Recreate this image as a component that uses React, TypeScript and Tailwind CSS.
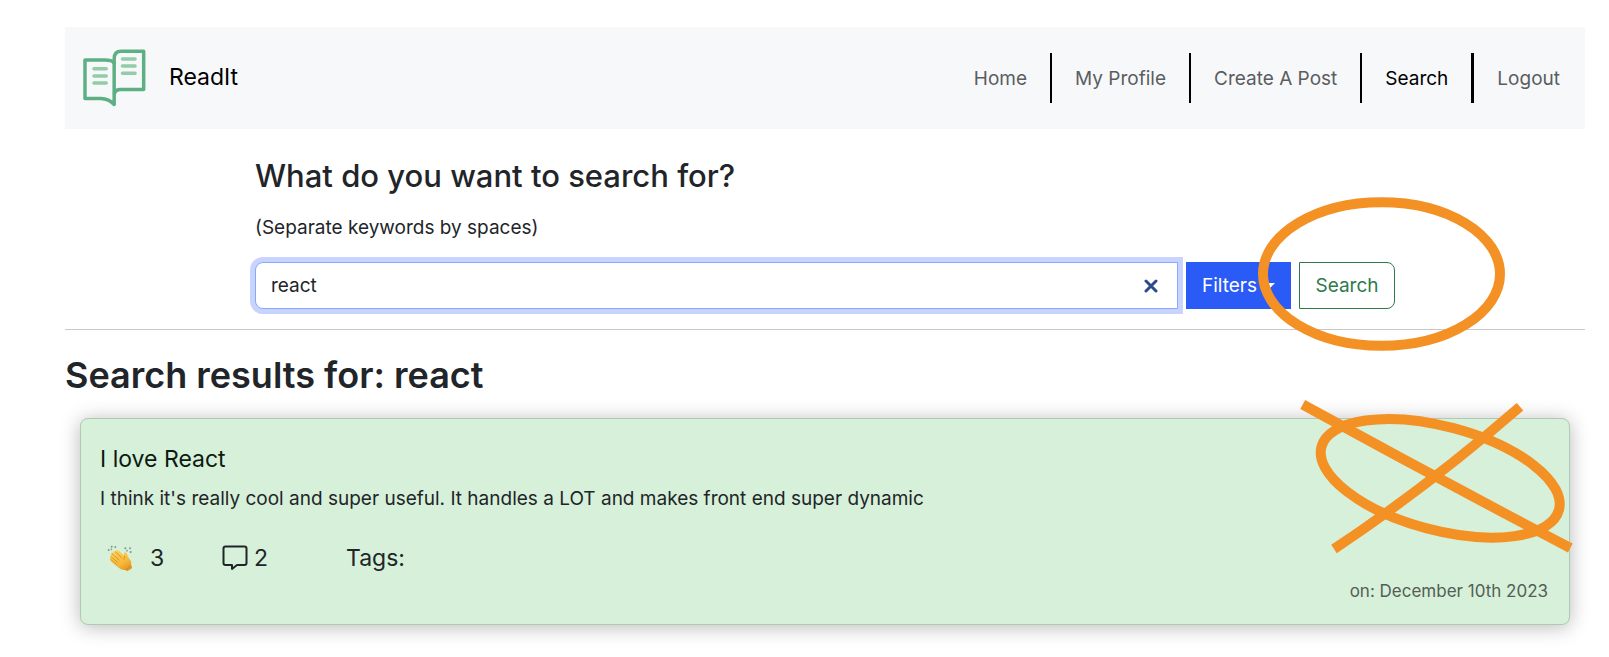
import { useState } from "react";

function Logo() {
  return (
    <svg className="h-[58px] w-[63px]" viewBox="99 118 190 174" fill="none" stroke="#5cb083" strokeWidth="10.5" strokeLinecap="round" strokeLinejoin="round" aria-hidden="true">
      <path d="M105 151H164Q188 151 193 161V285Q178 268 152 267H105Z" />
      <path d="M193 161V147Q193 124 214 124H282V240H212Q197 240 194 252" />
      <g stroke="#92cca8">
        <path d="M132 177H169M132 199H169M132 220H169" />
        <path d="M218 148H256M218 169H256M218 191H256" />
      </g>
    </svg>
  );
}

function Clap() {
  return (
    <svg className="h-[26px] w-[26px]" viewBox="0 0 78 78" aria-hidden="true">
      <defs>
        <linearGradient id="skin" x1="0" y1="0" x2="0.6" y2="1">
          <stop offset="0" stopColor="#ffd75e" />
          <stop offset="0.7" stopColor="#f6b93a" />
          <stop offset="1" stopColor="#e39a25" />
        </linearGradient>
      </defs>
      <g fill="#8b938c">
        <circle cx="5" cy="15" r="3" />
        <circle cx="14" cy="5" r="3" />
        <circle cx="13" cy="13" r="2.5" />
        <circle cx="25" cy="6" r="3" />
        <circle cx="55" cy="10" r="3" />
        <circle cx="60" cy="17" r="2.5" />
        <circle cx="69" cy="10" r="3" />
        <circle cx="71" cy="21" r="3" />
      </g>
      <path
        d="M27 17Q31 13 36 18L52 32Q50 25 54 22Q58 21 60 27Q61 34 67 41Q75 49 72 60L75 66Q76 70 72 72L63 77Q59 79 56 75Q44 76 35 68L13 50Q8 46 10 42Q7 37 12 34Q9 28 15 25Q17 19 23 20Z"
        fill="url(#skin)"
      />
      <path d="M15 26L36 45M12 35L32 52M11 43L29 59M25 20L43 38" stroke="#c9811c" strokeWidth="2.2" strokeLinecap="round" fill="none" />
      <path d="M52 32Q55 38 49 44M56 75Q66 70 72 60" stroke="#c9811c" strokeWidth="2" fill="none" />
    </svg>
  );
}

const links = [
  { label: "Home", style: "border-r-2 text-[#5a5d5f]" },
  { label: "My Profile", style: "border-r-2 text-[#5a5d5f]" },
  { label: "Create A Post", style: "border-r-2 text-[#5a5d5f]" },
  { label: "Search", style: "border-r-3 text-black" },
  { label: "Logout", style: "text-[#5a5d5f]" },
];

export default function App() {
  const [query, setQuery] = useState("react");
  return (
    <div className="bg-white px-6 pt-[27px] pb-8 pl-[65px] font-['Inter','Liberation_Sans',sans-serif] text-[19px] leading-[30px] text-[#212529]">
      <header className="flex items-center justify-between bg-[#f7f8fa] py-[22px] pr-[2px] pl-[18px]">
        <a href="#" className="flex items-center gap-[23px] text-[23px] text-black">
          <Logo />
          <span className="pb-[2px]">ReadIt</span>
        </a>
        <nav className="flex">
          {links.map((l) => (
            <a key={l.label} href="#" className={`border-black px-[23px] pt-[11px] pb-[9px] ${l.style}`}>
              {l.label}
            </a>
          ))}
        </nav>
      </header>

      <form className="relative mx-auto w-3/4 pt-[26px] pb-5" onSubmit={(e) => e.preventDefault()}>
        <h2 className="text-[31px] leading-[42px] font-medium">What do you want to search for?</h2>
        <label htmlFor="query" className="mt-4 block">
          (Separate keywords by spaces)
        </label>
        <div className="mt-[19px] flex gap-2">
          <div className="flex h-[47px] flex-1 items-center rounded-l-lg border border-[#86a9fb] bg-white pr-[19px] pl-[15px] ring-5 ring-[#c8d4fe]">
            <input
              id="query"
              type="text"
              value={query}
              onChange={(e) => setQuery(e.target.value)}
              className="min-w-0 flex-1 bg-transparent outline-none"
            />
            <button type="button" aria-label="Clear" onClick={() => setQuery("")}>
              <svg className="h-[14px] w-[14px]" viewBox="0 0 14 14" stroke="#2f4a8c" strokeWidth="3" strokeLinecap="round">
                <path d="M2 2L12 12M12 2L2 12" />
              </svg>
            </button>
          </div>
          <button type="button" className="flex w-[105px] items-center gap-[6px] bg-[#2a5bf6] pl-4 text-white">
            Filters
            <svg className="h-[6px] w-3" viewBox="0 0 12 6" fill="currentColor" aria-hidden="true">
              <path d="M0 0H12L6 6Z" />
            </svg>
          </button>
          <button type="submit" className="w-24 rounded-r-lg border border-[#2f7a4d] text-[#2f7a4d]">
            Search
          </button>
        </div>
        <svg className="pointer-events-none absolute top-[67px] -right-[112px] h-[156px] w-[250px]" viewBox="0 0 250 156" fill="none" stroke="#f39125" strokeWidth="10" aria-hidden="true">
          <ellipse cx="124.5" cy="78" rx="118.5" ry="71.7" />
        </svg>
      </form>

      <main className="border-t border-[#c8c8c9] pt-[21px]">
        <h1 className="text-4xl leading-[48px] font-semibold">Search results for: react</h1>
        <article className="relative mx-[15px] mt-[19px] rounded-lg border border-[#b0c9b3] bg-[#d7f0d9] pt-6 pr-[21px] pb-[18px] pl-[19px] shadow-[0_2px_20px_rgba(0,0,0,0.28)]">
          <h3 className="text-[23px] leading-8 text-[#0d1a12]">I love React</h3>
          <p className="mt-[9px]">I think it's really cool and super useful. It handles a LOT and makes front end super dynamic</p>
          <div className="mt-7 flex items-center text-[23px] leading-8">
            <button type="button" className="flex w-[122px] items-center gap-[17px] pl-[7px]">
              <Clap />
              <span>3</span>
            </button>
            <a href="#" className="flex w-[124px] items-center gap-[6px]">
              <svg className="h-[26px] w-[26px]" viewBox="0 0 26 26" fill="none" stroke="#212529" strokeWidth="2" strokeLinejoin="round" aria-hidden="true">
                <path d="M3.5 1.5H22.5Q24.5 1.5 24.5 3.5V18Q24.5 20 22.5 20H15L10 24V20H3.5Q1.5 20 1.5 18V3.5Q1.5 1.5 3.5 1.5Z" />
              </svg>
              <span>2</span>
            </a>
            <span>Tags:</span>
          </div>
          <p className="mt-[2px] text-right text-[17px] leading-[30px] text-[#535e57]">on: December 10th 2023</p>
          <svg className="pointer-events-none absolute -top-[19px] -right-[6px] h-[160px] w-[280px]" viewBox="1295 400 280 160" fill="none" stroke="#f39125" strokeWidth="10" aria-hidden="true">
            <ellipse cx="1440.2" cy="478.3" rx="122.9" ry="51.9" transform="rotate(14.9 1440.2 478.3)" />
            <path d="M1302.7 404.5Q1435 477 1570.3 548" />
            <path d="M1520 406.7Q1427 487.2 1334 549" />
          </svg>
        </article>
      </main>
    </div>
  );
}
